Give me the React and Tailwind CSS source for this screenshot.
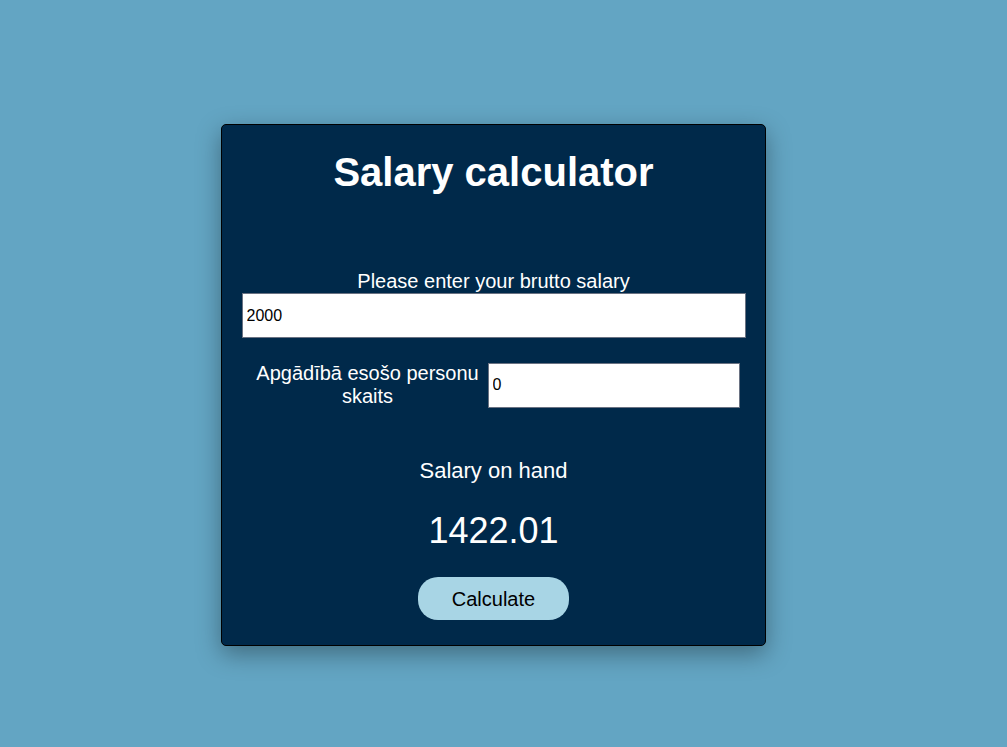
import React, { useState } from 'react';

const App = () => {
  const [brutto, setBrutto] = useState('2000');
  const [dependents, setDependents] = useState('0');
  const [result, setResult] = useState('1422.01');

  // Rough Latvian payroll estimate
  const handleCalculate = () => {
    const gross = parseFloat(brutto) || 0;
    const deps = parseInt(dependents, 10) || 0;
    const social = gross * 0.105;
    const taxable = Math.max(0, gross - social - deps * 250);
    const net = gross - social - taxable * 0.2;
    setResult(net.toFixed(2));
  };

  return (
    <div className="min-h-screen w-full bg-[#63a5c3] flex justify-center pt-[124px] pr-[21px] font-['Liberation_Sans',Arial,sans-serif]">
      <div className="w-[545px] h-[522px] bg-[#00294a] border border-black rounded-[5px] shadow-[0_8px_24px_rgba(0,0,0,0.35)] pl-5 pr-[19px] pt-6 flex flex-col items-center text-white">
        <h1 className="text-[40px] leading-[46px] font-bold">Salary calculator</h1>

        <label className="mt-[75px] text-[20px] leading-[23px] text-center w-full">
          Please enter your brutto salary
        </label>
        <input
          type="text"
          value={brutto}
          onChange={(e) => setBrutto(e.target.value)}
          className="w-full h-[45px] bg-white border border-gray-500 px-[4px] text-[16px] text-black outline-none"
        />

        <div className="mt-[24px] w-full flex items-center pl-[6px] pr-[5px]">
          <label className="w-[240px] text-[20px] leading-[23px] text-center">
            Apgādībā esošo personu skaits
          </label>
          <input
            type="text"
            value={dependents}
            onChange={(e) => setDependents(e.target.value)}
            className="w-[252px] h-[45px] bg-white border border-gray-500 px-[4px] text-[16px] text-black outline-none"
          />
        </div>

        <p className="mt-[50px] text-[22px] leading-[25px]">Salary on hand</p>
        <p className="mt-[27px] text-[36px] leading-[41px]">{result}</p>

        <button
          type="button"
          onClick={handleCalculate}
          className="mt-[26px] w-[151px] h-[43px] rounded-[20px] bg-[#a8d5e5] text-black text-[20px]"
        >
          Calculate
        </button>
      </div>
    </div>
  );
};

export default App;
